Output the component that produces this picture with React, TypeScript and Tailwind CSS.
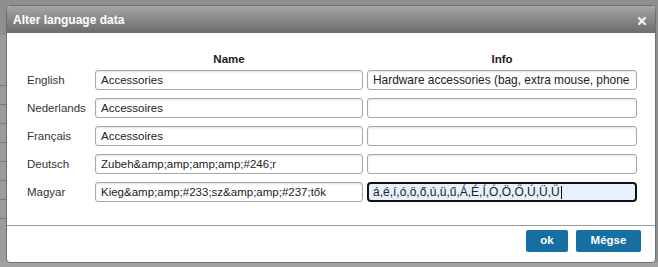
import React from "react";

const font = { fontFamily: '"Liberation Sans", Arial, sans-serif' };

const rows = [
  { label: "English", name: "Accessories", info: "Hardware accessories (bag, extra mouse, phone" },
  { label: "Nederlands", name: "Accessoires", info: "" },
  { label: "Français", name: "Accessoires", info: "" },
  { label: "Deutsch", name: "Zubeh&amp;amp;amp;amp;#246;r", info: "" },
];

const magyarName = "Kieg&amp;amp;#233;sz&amp;amp;#237;tők";

function Field({ value, wide }: { value: string; wide?: boolean }) {
  return (
    <input
      readOnly
      value={value}
      className={
        wide
          ? "h-[20px] w-full rounded-[3px] border border-[#a8a8a8] bg-white px-[5px] text-[11.9px] text-[#222] shadow-[inset_0_1px_2px_rgba(0,0,0,0.12)] outline-none"
          : "h-[20px] w-full rounded-[3px] border border-[#a8a8a8] bg-white px-[5px] text-[11.5px] text-[#222] shadow-[inset_0_1px_2px_rgba(0,0,0,0.12)] outline-none"
      }
      style={font}
    />
  );
}

export default function App() {
  return (
    <div className="relative h-[267px] w-[658px] overflow-hidden bg-[#8f8f8f]" style={font}>
      {/* background strip hints */}
      <div className="absolute left-0 top-[35px] flex h-[230px] w-[6px] flex-col bg-[#9c9c9c]">
        <div className="mt-[50px] h-px bg-[#777]" />
        <div className="mt-[18px] h-px bg-[#777]" />
        <div className="mt-[18px] h-px bg-[#777]" />
        <div className="mt-[18px] h-px bg-[#777]" />
        <div className="mt-[18px] h-px bg-[#777]" />
        <div className="mt-[18px] h-px bg-[#777]" />
        <div className="mt-[18px] h-px bg-[#777]" />
        <div className="mt-[18px] h-px bg-[#777]" />
      </div>
      <div className="absolute bottom-0 left-0 h-[5px] w-full bg-[#a2a2a2]" />
      <div className="absolute left-[6px] top-[5px] flex h-[258px] w-[650px] flex-col overflow-hidden rounded-[4px] border border-[#6f6f6f] bg-white">
        {/* title bar */}
        <div className="flex h-[27px] items-center justify-between bg-gradient-to-b from-[#a6a6a6] to-[#6c6c6c] pl-[6px] pr-[9px]">
          <span className="text-[12px] font-bold text-white">Alter language data</span>
          <svg width="8" height="8" viewBox="0 0 8 8" className="mt-[2px]">
            <path d="M1 1 L7 7 M7 1 L1 7" stroke="#efefef" strokeWidth="2.4" strokeLinecap="square" />
          </svg>
        </div>
        {/* body */}
        <div className="flex flex-1 flex-col pl-[20px] pt-[19px]">
          <div className="grid grid-cols-[64px_268px_270px] gap-x-[4px]">
            <div />
            <div className="text-center text-[11.5px] font-bold leading-[14px] text-[#222]">Name</div>
            <div className="text-center text-[11.5px] font-bold leading-[14px] text-[#222]">Info</div>
          </div>
          <div className="mt-[4px] grid grid-cols-[64px_268px_270px] gap-x-[4px] gap-y-[8px]">
            {rows.map((r) => (
              <React.Fragment key={r.label}>
                <div className="flex h-[20px] items-center pt-[2px] text-[11.5px] text-[#333]">{r.label}</div>
                <Field value={r.name} />
                <Field value={r.info} wide />
              </React.Fragment>
            ))}
            <div className="flex h-[20px] items-center pt-[2px] text-[11.5px] text-[#333]">Magyar</div>
            <Field value={magyarName} />
            <div className="flex h-[20px] items-center overflow-hidden rounded-[4px] border-2 border-[#111] bg-[#e8f0fe] px-[4px] text-[12px] text-[#222]">
              <span className="whitespace-nowrap">á,é,í,ó,ö,ő,ú,ü,ű,Á,É,Í,Ó,Ö,Ő,Ú,Ü,Ű</span>
              <span className="ml-px h-[13px] w-px bg-black" />
            </div>
          </div>
        </div>
        {/* footer */}
        <div className="flex h-[37px] items-start justify-end gap-[8px] border-t border-[#9a9a9a] pr-[14px] pt-[4px]">
          <button className="h-[22px] w-[42px] rounded-[2px] bg-[#176fa1] text-[11.5px] font-bold text-white">ok</button>
          <button className="h-[22px] w-[65px] rounded-[2px] bg-[#176fa1] text-[11.5px] font-bold text-white">Mégse</button>
        </div>
      </div>
    </div>
  );
}
